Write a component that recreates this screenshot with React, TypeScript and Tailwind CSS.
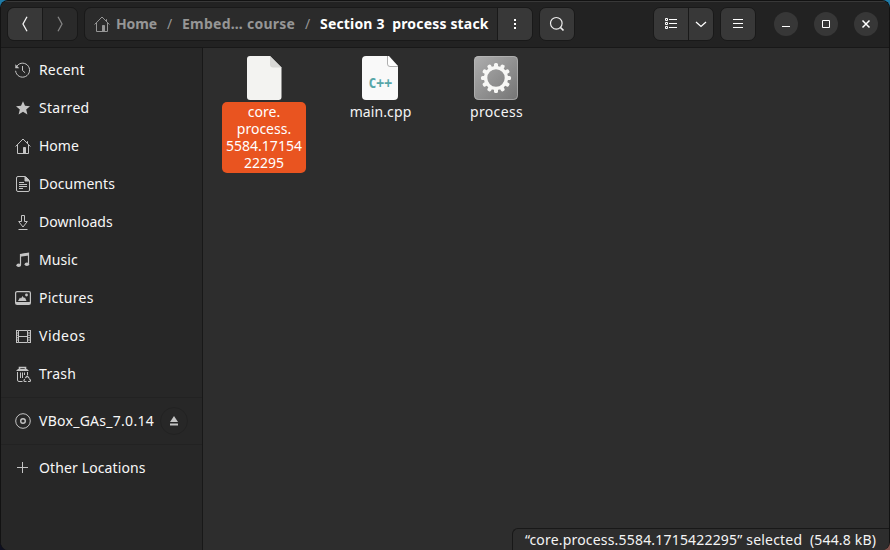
import React from "react";

type IconProps = { children: React.ReactNode; className?: string };

function Icon({ children, className = "" }: IconProps) {
  return (
    <svg viewBox="0 0 16 16" className={"block h-4 w-4 shrink-0 " + className} fill="none" stroke="currentColor" strokeWidth="1">
      {children}
    </svg>
  );
}

const homeShape = (
  <>
    <path d="M.6 8.5 8 1l7.4 7.5M2.5 7v8.5h11V7M12.5 3.2v2.6" />
    <path d="M8.5 15V9.5h2V15z" fill="currentColor" />
  </>
);

const icons = {
  recent: (
    <>
      <path d="M1.1 5.5A7 7 0 1 1 .6 8.8M7.5 4v4.5l2.6 2.3" />
      <path d="M.3 2.2v4h4z" fill="currentColor" stroke="none" />
    </>
  ),
  starred: <path d="m8 1.2 2 4.600 5 .4-3.800 3.300 1.200 4.900L8 11.800l-4.400 2.600 1.200-4.900L1 6.200l5-.4z" fill="currentColor" stroke="none" />,
  home: homeShape,
  documents: (
    <>
      <path d="M3 .5h7.5l4 4V14a1.5 1.5 0 0 1-1.5 1.5H3A1.5 1.5 0 0 1 1.500 14V2A1.500 1.500 0 0 1 3 .5z" />
      <path d="M10 1v4h4z" fill="currentColor" />
      <path d="M4 6.500h5M4 8.500h8M4 10.500h8M4 12.500h4" />
    </>
  ),
  downloads: <path d="M6.500 1.500h3v6h2.800L8 13 3.700 7.500h2.800zM3.500 15.500h9" />,
  music: (
    <>
      <path d="M5.500 13V2.500l8-1.200V12" strokeWidth="1.200" />
      <path d="M5 2.200 14 .9v2.500L5 4.700z" fill="currentColor" stroke="none" />
      <ellipse cx="3.700" cy="13.200" rx="2.300" ry="1.800" fill="currentColor" stroke="none" />
      <ellipse cx="11.900" cy="12.200" rx="2.300" ry="1.800" fill="currentColor" stroke="none" />
    </>
  ),
  pictures: (
    <>
      <rect x=".6" y="1.600" width="14.800" height="12.800" rx="1.500" strokeWidth="1.200" />
      <path d="M1 12h14v2H1zM3 11l2-3.500 1 1L7.500 6l1.500 2 1-.5 1.500 3.500z" fill="currentColor" stroke="none" />
      <circle cx="11.500" cy="5" r="1.400" fill="currentColor" stroke="none" />
    </>
  ),
  videos: (
    <>
      <path d="M3.500 2.500h9v12h-9zM3.500 8.500h9M1.500 2v13M15.500 2v13" />
      <path d="M2.500 2v13M14 2v13" strokeWidth="2" strokeDasharray="1 1.400" />
    </>
  ),
  trash: (
    <>
      <path d="M1.500 4.500h12M2.500 3.500h10" />
      <path d="M4.500 3V1.500h6V3" strokeWidth="1.600" />
      <path d="M2.500 6v8a1.500 1.500 0 0 0 1.500 1.500h3.500M12.500 6v3M5.500 6.500V12M7.500 6.500V12M9.500 6.500V9" />
      <path d="m10.300 12 1.900-2 1.900 2M14.200 12.500l1.200 1.600c.3.800-.2 1.400-1 1.400H13M11.500 15.500H10c-.9 0-1.300-.7-.9-1.400l.6-1" strokeWidth="1.100" />
    </>
  ),
  disc: (
    <>
      <circle cx="8" cy="8" r="7.300" />
      <circle cx="8" cy="8" r="2.300" strokeWidth="1.400" />
    </>
  ),
  plus: <path d="M7.500 2v11M2 7.500h11" />,
};

type Place = { name: string; icon: keyof typeof icons; tracking: string };

const places: Place[] = [
  { name: "Recent", icon: "recent", tracking: "tracking-[0.15px]" },
  { name: "Starred", icon: "starred", tracking: "tracking-[0.3px]" },
  { name: "Home", icon: "home", tracking: "tracking-[0px]" },
  { name: "Documents", icon: "documents", tracking: "tracking-[0.05px]" },
  { name: "Downloads", icon: "downloads", tracking: "tracking-[0.05px]" },
  { name: "Music", icon: "music", tracking: "tracking-[0.1px]" },
  { name: "Pictures", icon: "pictures", tracking: "tracking-[0.25px]" },
  { name: "Videos", icon: "videos", tracking: "tracking-[0.5px]" },
  { name: "Trash", icon: "trash", tracking: "tracking-[0.3px]" },
];

function PlaceRow({ name, icon, tracking, children }: Place & { children?: React.ReactNode }) {
  return (
    <div className="flex h-[38px] items-center pl-[14px] pr-[14px]">
      <Icon className="text-[#c4c4c4]">{icons[icon]}</Icon>
      <span className={"ml-2 leading-5 text-[#f7f7f7] whitespace-nowrap " + tracking}>{name}</span>
      {children}
    </div>
  );
}

function WindowButton({ children }: { children: React.ReactNode }) {
  return <button className="flex h-6 w-6 items-center justify-center rounded-full bg-[#373737] text-white">{children}</button>;
}

function Header() {
  return (
    <header className="flex h-[47px] shrink-0 items-start border-t border-b border-t-[#383838] border-b-[#181818] bg-[#222222] pt-[5px] pl-[6px] pr-[11px]">
      <div className="flex h-[34px] w-[71px] overflow-hidden rounded-[7px] border border-[#191919]">
        <button className="flex w-[35px] items-center justify-center border-r border-[#191919] bg-[#383838] text-[#f5f5f5]">
          <Icon><path d="m10 .8-4 7.200 4 7.200" strokeWidth="1.300" /></Icon>
        </button>
        <button className="flex flex-1 items-center justify-center bg-[#2a2a2a] text-[#858585]">
          <Icon><path d="m6 .8 4 7.200-4 7.200" strokeWidth="1.300" /></Icon>
        </button>
      </div>
      <nav className="ml-[6px] flex h-[34px] w-[449px] overflow-hidden rounded-[7px] border border-[#191919] bg-[#2b2b2b] font-bold text-[#969696]">
        <div className="flex w-[412px] items-center whitespace-pre pb-[2px] pl-[9px]">
          <Icon className="mt-[2px]">{homeShape}</Icon>
          <span className="ml-[6px] w-[51px] tracking-[-0.15px]">Home</span>
          <span className="w-[15px] font-normal">/</span>
          <span className="w-[123px] tracking-[0.25px]">Embed… course</span>
          <span className="w-[15px] font-normal">/</span>
          <span className="tracking-[0.17px] text-white">Section 3  process stack</span>
        </div>
        <button className="flex flex-1 items-center justify-center border-l border-[#191919] bg-[#383838] text-white">
          <Icon><path d="M7 3h2v2H7zM7 7h2v2H7zM7 11h2v2H7z" fill="currentColor" stroke="none" /></Icon>
        </button>
      </nav>
      <button className="ml-[6px] flex h-[34px] w-9 items-center justify-center rounded-[7px] border border-[#191919] bg-[#383838] text-[#eeeeee]">
        <Icon><circle cx="7.300" cy="7.300" r="5.800" strokeWidth="1.200" /><path d="m11.500 11.500 3 3" strokeWidth="1.700" /></Icon>
      </button>
      <div className="ml-auto flex h-[34px] w-[61px] overflow-hidden rounded-[7px] border border-[#191919] bg-[#383838] text-white">
        <button className="flex w-[35px] items-center justify-center border-r border-[#191919]">
          <Icon><path d="M2.500 2.500h2v2h-2zM2.500 6.500h2v2h-2zM2.500 10.500h2v2h-2zM6 3.500h8M6 7.500h8M6 11.500h8" /></Icon>
        </button>
        <button className="flex flex-1 items-center justify-center">
          <Icon><path d="m3 6 5 4.500L13 6" strokeWidth="1.300" /></Icon>
        </button>
      </div>
      <button className="ml-[6px] flex h-[34px] w-9 items-center justify-center rounded-[7px] border border-[#191919] bg-[#383838] text-white">
        <Icon><path d="M3 3.500h10M3 7.500h10M3 11.500h10" /></Icon>
      </button>
      <div className="mt-[5px] ml-[18px] flex gap-4">
        <WindowButton><Icon><path d="M4 10.500h8" /></Icon></WindowButton>
        <WindowButton><Icon><path d="M4.500 4.500h7v7h-7z" /></Icon></WindowButton>
        <WindowButton><Icon><path d="m4.500 4.500 7 7m0-7-7 7" strokeWidth="1.500" /></Icon></WindowButton>
      </div>
    </header>
  );
}

function BlankFile() {
  return (
    <svg viewBox="0 0 48 48" className="block h-12 w-12">
      <path d="M10 2h20l11.500 11.500V43a3 3 0 0 1-3 3H10a3 3 0 0 1-3-3V5a3 3 0 0 1 3-3z" fill="#f3f3f1" />
      <path d="M30 2v8.500a3 3 0 0 0 3 3h8.500z" fill="#d8d8d6" />
    </svg>
  );
}

function CppFile() {
  return (
    <svg viewBox="0 0 48 48" className="block h-12 w-12">
      <path d="M10 2h23l9 10v30a4 4 0 0 1-4 4H10a4 4 0 0 1-4-4V6a4 4 0 0 1 4-4z" fill="#f9f9f9" />
      <path d="M31.500 2v8a2.500 2.500 0 0 0 2.500 2.500h8" fill="#ffffff" stroke="#9b9b9b" strokeWidth=".8" />
      <text x="12.500" y="34" fontSize="14" fontWeight="700" textLength="23.500" lengthAdjust="spacingAndGlyphs" fill="#57a6a8" fontFamily="'DejaVu Sans Mono', monospace">C++</text>
    </svg>
  );
}

const teeth = Array.from({ length: 12 }, (_, i) => i * 30);

function Executable() {
  return (
    <svg viewBox="0 0 48 48" className="block h-12 w-12">
      <defs>
        <linearGradient id="plate" x1="0" y1="0" x2="1" y2="1">
          <stop stopColor="#afafaf" />
          <stop offset="1" stopColor="#747474" />
        </linearGradient>
      </defs>
      <rect x="2" y="2" width="44" height="44" rx="4.500" fill="url(#plate)" />
      <rect x="2.500" y="2.500" width="43" height="43" rx="4" fill="none" stroke="#bcbcbc" opacity=".6" />
      <circle cx="24" cy="24" r="10.400" fill="none" stroke="#f7f7f5" strokeWidth="3.400" />
      {teeth.map((angle) => (
        <path key={angle} d="M22 13v-2.500a1.500 1.500 0 0 1 1.500-1.500h1a1.500 1.500 0 0 1 1.500 1.500V13z" fill="#f7f7f5" transform={`rotate(${angle} 24 24)`} />
      ))}
    </svg>
  );
}

export default function App() {
  return (
    <div className="h-[550px] w-[890px] overflow-hidden bg-[linear-gradient(180deg,#1f7ba7_20%,transparent_50%),linear-gradient(90deg,#0e1020,#80504a)] font-['Noto_Sans','Open_Sans',sans-serif] text-[14px]">
      <div className="relative flex h-full flex-col overflow-hidden rounded-[8px] border-x border-t border-[#121212] bg-[#2d2d2d]">
        <Header />
        <div className="flex min-h-0 flex-1">
          <aside className="w-[202px] shrink-0 border-r border-[#181818] bg-[#272727] pt-[3px]">
            {places.map((place) => <PlaceRow key={place.name} {...place} />)}
            <div className="mt-1 border-y border-[#222222] py-1">
              <PlaceRow name="VBox_GAs_7.0.14" icon="disc" tracking="tracking-[0.27px]">
                <button className="ml-auto flex h-7 w-7 shrink-0 items-center justify-center rounded-full border border-[#222222] text-[#c4c4c4]">
                  <Icon><path d="M8 3 12 9H4zM4 10.500h8v2H4z" fill="currentColor" stroke="none" /></Icon>
                </button>
              </PlaceRow>
            </div>
            <div className="mt-1"><PlaceRow name="Other Locations" icon="plus" tracking="tracking-[0.12px]" /></div>
          </aside>
          <main className="flex flex-1 items-start gap-8 pl-[19px] pt-[6px] text-center leading-[17px] text-[#f4f4f4]">
            <div className="flex w-[84px] flex-col items-center">
              <BlankFile />
              <div className="h-[71px] w-full rounded-[5px] bg-[#e95420] pt-[1px] text-white">
                core.<br />process.<br />5584.17154<br />22295
              </div>
            </div>
            <div className="flex w-[84px] flex-col items-center"><CppFile /><span className="pt-[1px] pl-px tracking-[0.1px]">main.cpp</span></div>
            <div className="flex w-[84px] flex-col items-center"><Executable /><span className="pt-[1px] pl-px tracking-[0.35px]">process</span></div>
          </main>
        </div>
        <div className="absolute right-[-1px] bottom-0 h-[22px] w-[378px] rounded-tl-[6px] border-t border-l border-[#181818] bg-[#2d2d2d] pl-[12px] leading-[22px] tracking-[0.19px] whitespace-pre text-[#f4f4f4]">“core.process.5584.1715422295” selected  (544.8 kB)</div>
      </div>
    </div>
  );
}
